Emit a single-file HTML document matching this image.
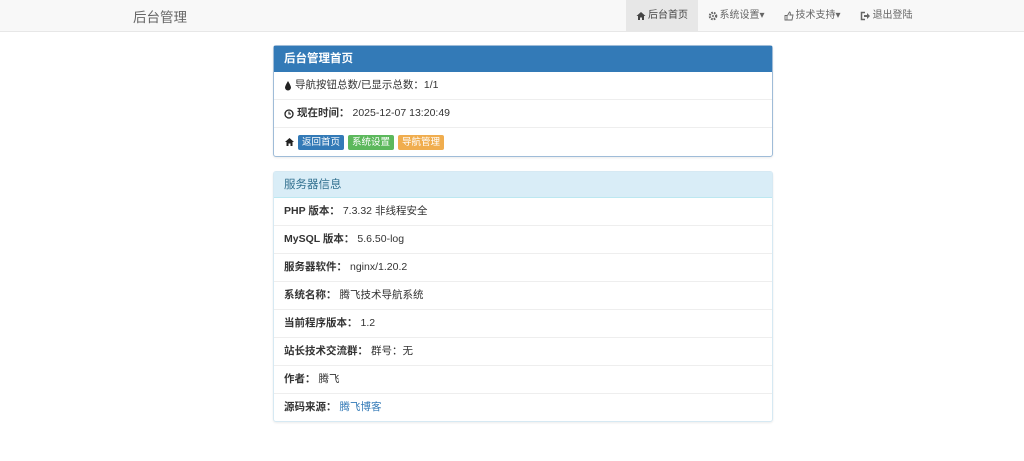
<!DOCTYPE html><html><head><meta charset="utf-8"><style>
body{margin:0;background:#fff;font-family:"Liberation Sans","Noto Sans CJK SC",sans-serif;font-size:10.5px;color:#333;width:1024px;height:461px;overflow:hidden}
.nav{height:31px;background:#f8f8f8;border-bottom:1px solid #e7e7e7;position:relative}
.brand{position:absolute;left:133px;top:6px;font-size:13.5px;color:#666}
.menu{position:absolute;left:626px;top:0;display:flex;height:31px}
.menu div{padding:0 9.5px;line-height:31px;color:#666;font-size:10px;display:flex;align-items:center;gap:2px}
.menu .act{background:#e7e7e7;color:#444;padding:0 10px}
.panel{position:absolute;left:273px;width:498px;border:1px solid #9fbcd8;border-radius:3px;background:#fff;box-shadow:0 1px 2px rgba(0,0,0,.08)}
.ph{background:#337ab7;color:#fff;font-size:11.5px;font-weight:bold;height:26px;line-height:26px;padding-left:10px}
.row{height:27px;line-height:27px;border-top:1px solid #eee;padding-left:10px;display:flex;align-items:center;gap:3px}
.p2{border-color:#d6e9f3}
.p2 .ph{background:#d9edf7;color:#31708f;font-weight:normal;height:25px;border-bottom:1px solid #bce8f1}
.p2 .ph+.row{border-top:none}
b{font-weight:bold}
.lb{display:inline-block;color:#fff;padding:0 4px;line-height:15px;border-radius:2px;font-size:9.5px;margin-right:1px}
a{color:#337ab7;text-decoration:none}
svg{display:inline-block}
</style></head><body>
<div class="nav"><div class="brand">后台管理</div>
<div class="menu"><div class="act"><svg width="10" height="10" viewBox="0 0 10 10"><path d="M5 1 L0.5 5 H2 V9 H4 V6.5 H6 V9 H8 V5 H9.5 Z" fill="#444"/></svg>后台首页</div>
<div><svg width="10" height="10" viewBox="0 0 10 10"><circle cx="5" cy="5" r="3.2" fill="none" stroke="#666" stroke-width="2.2" stroke-dasharray="1.6 1"/><circle cx="5" cy="5" r="1" fill="#666"/></svg>系统设置▾</div>
<div><svg width="10" height="10" viewBox="0 0 10 10"><path d="M1 4.5 H3 V9 H1 Z M3.5 4.5 L5.5 1 Q6.5 1 6.3 3 L6 4 H9 L8 9 H3.5" fill="none" stroke="#666" stroke-width="0.9"/></svg>技术支持▾</div>
<div><svg width="11" height="10" viewBox="0 0 11 10"><path d="M5 1.5 H1.5 V8.5 H5" fill="none" stroke="#666" stroke-width="1.5"/><path d="M4 4 H7 V2 L10 5 L7 8 V6 H4 Z" fill="#666"/></svg>退出登陆</div></div></div>
<div class="panel" style="top:45px"><div class="ph">后台管理首页</div>
<div class="row" style="border-top:none"><svg width="8" height="10" viewBox="0 0 8 10"><path d="M4 0 Q1 5 1 6.5 A3 3 0 0 0 7 6.5 Q7 5 4 0Z" fill="#222"/></svg> 导航按钮总数/已显示总数：1/1</div>
<div class="row"><svg width="10" height="10" viewBox="0 0 10 10"><circle cx="5" cy="5" r="4" fill="none" stroke="#222" stroke-width="1.3"/><path d="M5 2.5 V5 H7" fill="none" stroke="#222" stroke-width="1.1"/></svg> <b>现在时间：</b> 2025-12-07 13:20:49</div>
<div class="row" style="height:28px"><svg width="11" height="10" viewBox="0 0 10 10"><path d="M5 1 L0.5 5 H2 V9 H4 V6.5 H6 V9 H8 V5 H9.5 Z" fill="#222"/></svg> <span class="lb" style="background:#337ab7">返回首页</span><span class="lb" style="background:#5cb85c">系统设置</span><span class="lb" style="background:#f0ad4e">导航管理</span></div></div>
<div class="panel p2" style="top:171px"><div class="ph">服务器信息</div>
<div class="row"><b>PHP 版本：</b>7.3.32 非线程安全</div>
<div class="row"><b>MySQL 版本：</b>5.6.50-log</div>
<div class="row"><b>服务器软件：</b>nginx/1.20.2</div>
<div class="row"><b>系统名称：</b>腾飞技术导航系统</div>
<div class="row"><b>当前程序版本：</b>1.2</div>
<div class="row"><b>站长技术交流群：</b>群号：无</div>
<div class="row"><b>作者：</b>腾飞</div>
<div class="row"><b>源码来源：</b><a>腾飞博客</a></div></div>
</body></html>
